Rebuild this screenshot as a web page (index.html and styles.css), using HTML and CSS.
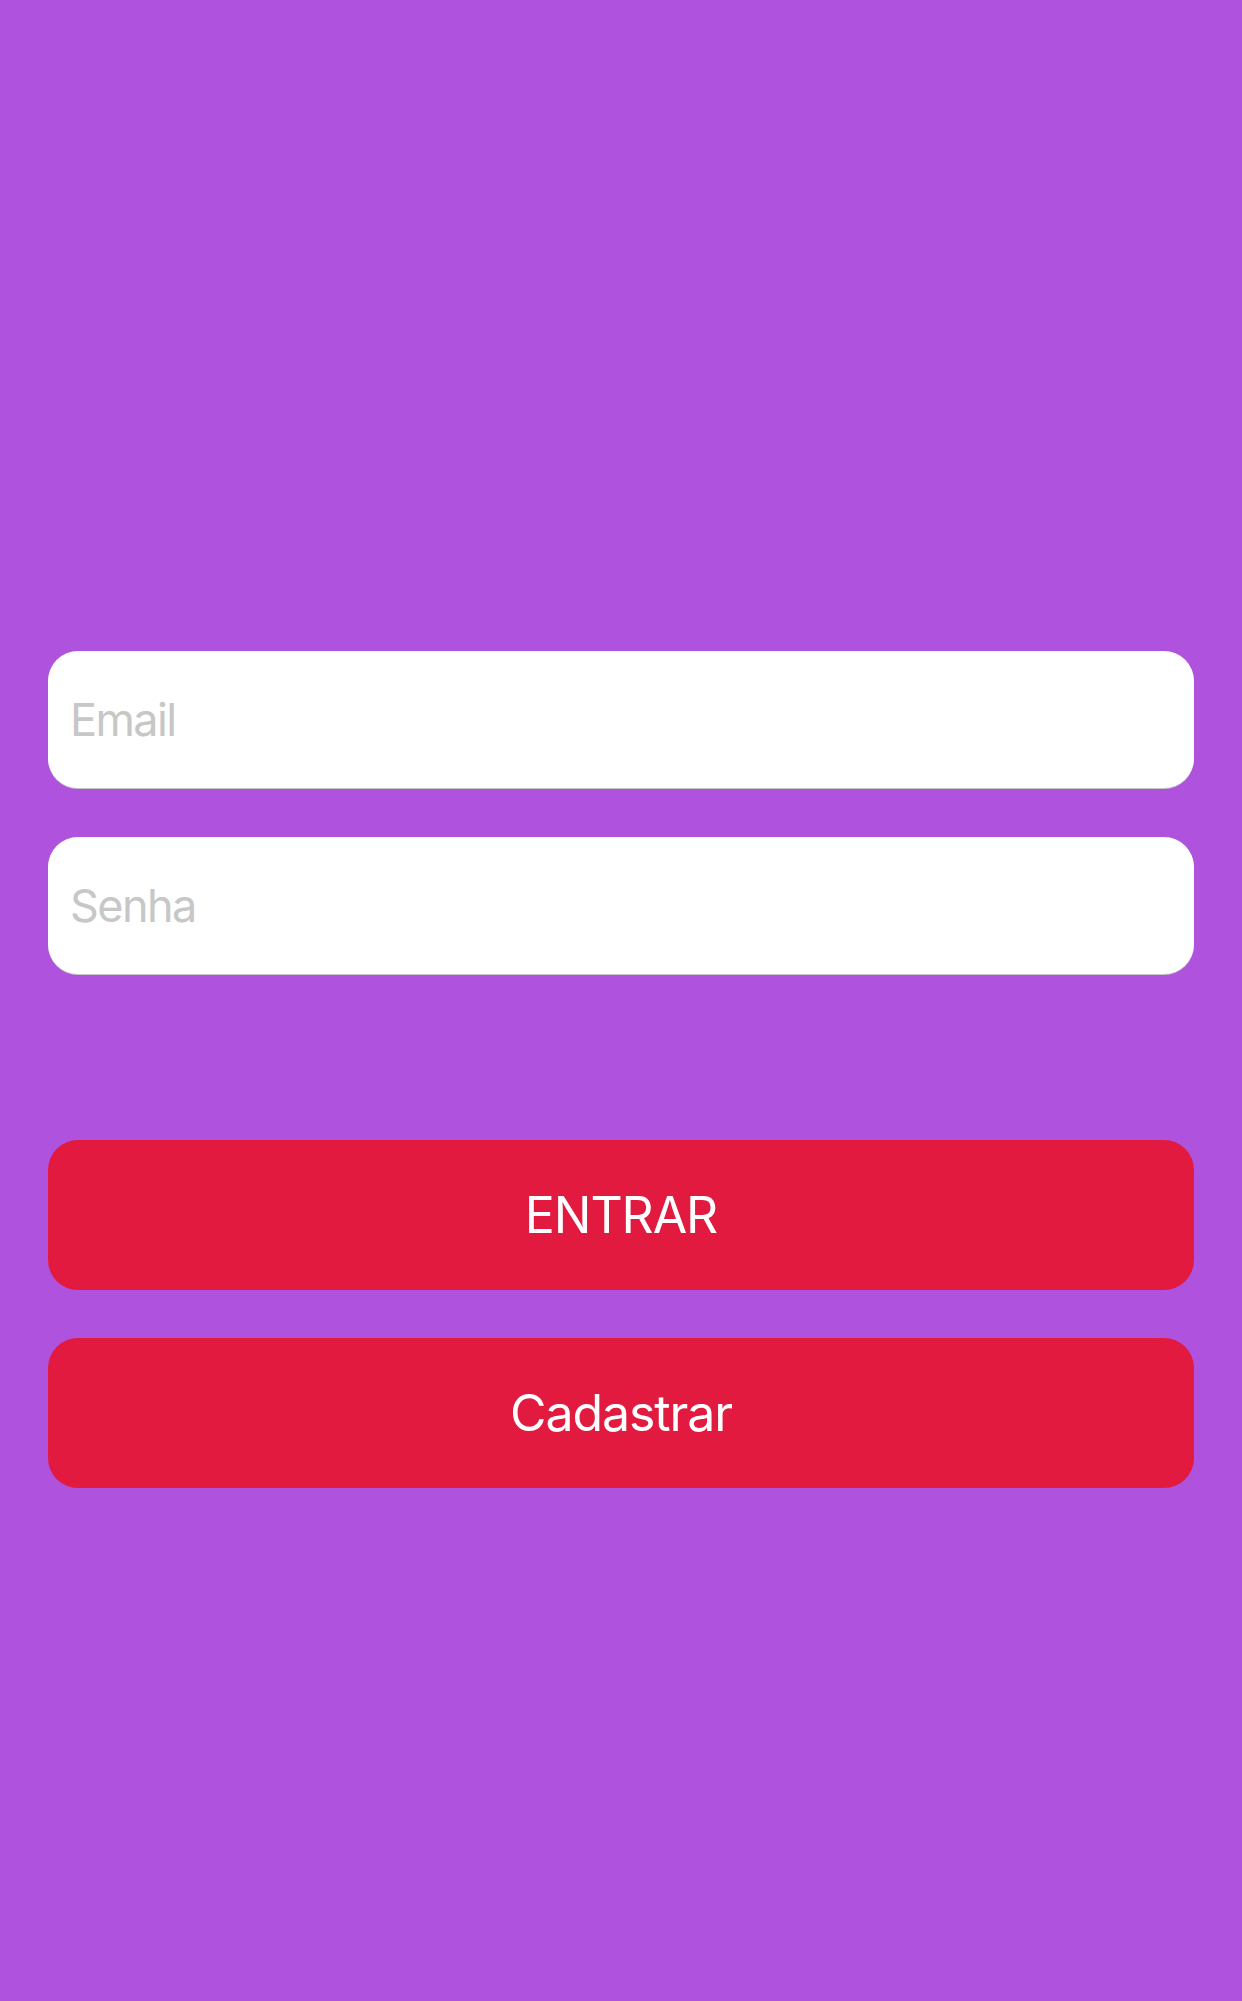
FILE: index.html
```html
<!DOCTYPE html>
<html lang="pt">
<head>
<meta charset="utf-8">
<title>Login</title>
<link rel="stylesheet" href="styles.css">
</head>
<body>
<main class="screen">
  <form class="login">
    <div class="fields">
      <input class="field" type="email" placeholder="Email">
      <input class="field" type="password" placeholder="Senha">
    </div>
    <div class="actions">
      <button class="btn" type="button">ENTRAR</button>
      <button class="btn" type="button">Cadastrar</button>
    </div>
  </form>
</main>
</body>
</html>
```

FILE: styles.css
```css
html, body {
  margin: 0;
  padding: 0;
  background: #af52de;
}
.screen {
  width: 1242px;
  height: 2001px;
  box-sizing: border-box;
  padding: 651px 48px 0 48px;
  font-family: Inter, "Noto Sans", sans-serif;
}
.login {
  display: flex;
  flex-direction: column;
  gap: 166px;
}
.fields {
  display: flex;
  flex-direction: column;
  gap: 49px;
}
.field {
  display: block;
  width: 100%;
  height: 137px;
  box-sizing: border-box;
  border: none;
  border-radius: 30px;
  background: #ffffff;
  box-shadow: 0 1px 0 #c6c6c6;
  padding: 0 22px;
  font-family: Inter, "Noto Sans", sans-serif;
  font-size: 45px;
  letter-spacing: -1.6px;
  color: #222;
  outline: none;
}
.field::placeholder {
  color: #c7c7c7;
}
.actions {
  display: flex;
  flex-direction: column;
  gap: 48px;
}
.btn {
  display: block;
  width: 100%;
  height: 150px;
  border: none;
  border-radius: 30px;
  background: #e21a3f;
  color: #ffffff;
  font-family: Inter, "Noto Sans", sans-serif;
  font-size: 50px;
  letter-spacing: -1.1px;
  font-weight: 400;
  padding: 0;
}
```
